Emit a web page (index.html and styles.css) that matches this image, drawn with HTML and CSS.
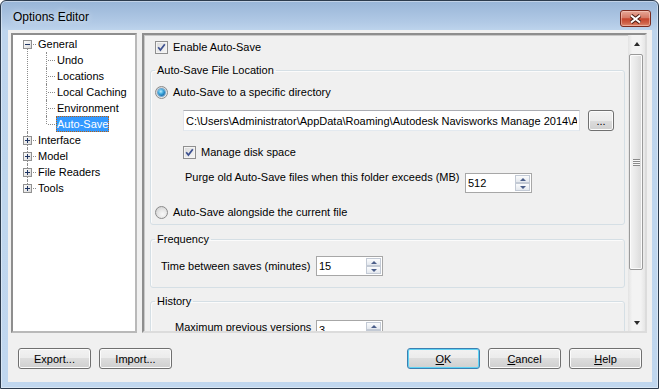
FILE: index.html
```html
<!DOCTYPE html>
<html lang="en">

<head>
  <meta charset="UTF-8" />
  <meta name="viewport" content="width=device-width, initial-scale=1.0" />
  <title>Options Editor</title>
  <link rel="stylesheet" href="styles.css">
</head>

<body>
  <div class="window">

    <div class="titlebar">
      <span class="title">Options Editor</span>
      <span class="close_btn">
        <svg width="13" height="10" viewBox="0 0 13 10">
          <path d="M2 1.5 L11 8.5 M11 1.5 L2 8.5" stroke="#4a1e16" stroke-width="4" />
          <path d="M2 1.5 L11 8.5 M11 1.5 L2 8.5" stroke="#ffffff" stroke-width="2" />
        </svg>
      </span>
    </div>

    <div class="client">
      <div class="main">

        <!-- Options tree -->
        <div class="tree">
          <ul class="tree_root">
            <li>
              <div class="node">
                <svg class="expander" width="14" height="9" viewBox="0 0 14 9">
                  <rect x="0.5" y="0.5" width="8" height="8" fill="url(#boxfill)" stroke="#919191" />
                  <path d="M2 4.5 H7" stroke="#1f3563" />
                  <rect x="10" y="4" width="1" height="1" fill="#8c8c8c" />
                  <rect x="12" y="4" width="1" height="1" fill="#8c8c8c" />
                  <defs>
                    <linearGradient id="boxfill" x1="0" y1="0" x2="1" y2="1">
                      <stop offset="0" stop-color="#ffffff" />
                      <stop offset="1" stop-color="#d8d8d8" />
                    </linearGradient>
                  </defs>
                </svg>
                <span class="label">General</span>
              </div>
              <ul class="children">
                <li><span class="label">Undo</span></li>
                <li><span class="label">Locations</span></li>
                <li><span class="label">Local Caching</span></li>
                <li><span class="label">Environment</span></li>
                <li><span class="label selected">Auto-Save</span></li>
              </ul>
            </li>
            <li>
              <div class="node">
                <svg class="expander" width="14" height="9" viewBox="0 0 14 9">
                  <rect x="0.5" y="0.5" width="8" height="8" fill="url(#boxfill)" stroke="#919191" />
                  <path d="M2 4.5 H7 M4.5 2 V7" stroke="#1f3563" />
                  <rect x="10" y="4" width="1" height="1" fill="#8c8c8c" />
                  <rect x="12" y="4" width="1" height="1" fill="#8c8c8c" />
                </svg>
                <span class="label">Interface</span>
              </div>
            </li>
            <li>
              <div class="node">
                <svg class="expander" width="14" height="9" viewBox="0 0 14 9">
                  <rect x="0.5" y="0.5" width="8" height="8" fill="url(#boxfill)" stroke="#919191" />
                  <path d="M2 4.5 H7 M4.5 2 V7" stroke="#1f3563" />
                  <rect x="10" y="4" width="1" height="1" fill="#8c8c8c" />
                  <rect x="12" y="4" width="1" height="1" fill="#8c8c8c" />
                </svg>
                <span class="label">Model</span>
              </div>
            </li>
            <li>
              <div class="node">
                <svg class="expander" width="14" height="9" viewBox="0 0 14 9">
                  <rect x="0.5" y="0.5" width="8" height="8" fill="url(#boxfill)" stroke="#919191" />
                  <path d="M2 4.5 H7 M4.5 2 V7" stroke="#1f3563" />
                  <rect x="10" y="4" width="1" height="1" fill="#8c8c8c" />
                  <rect x="12" y="4" width="1" height="1" fill="#8c8c8c" />
                </svg>
                <span class="label">File Readers</span>
              </div>
            </li>
            <li>
              <div class="node">
                <svg class="expander" width="14" height="9" viewBox="0 0 14 9">
                  <rect x="0.5" y="0.5" width="8" height="8" fill="url(#boxfill)" stroke="#919191" />
                  <path d="M2 4.5 H7 M4.5 2 V7" stroke="#1f3563" />
                  <rect x="10" y="4" width="1" height="1" fill="#8c8c8c" />
                  <rect x="12" y="4" width="1" height="1" fill="#8c8c8c" />
                </svg>
                <span class="label">Tools</span>
              </div>
            </li>
          </ul>
        </div>

        <!-- Auto-Save page -->
        <div class="pane">
          <div class="pane_content">

            <div class="check_row enable_row">
              <span class="checkbox">
                <svg width="9" height="9" viewBox="0 0 9 9"><path d="M1.2 4.2 L3.4 7 L7.8 1.2" fill="none" stroke="#3d5190" stroke-width="1.7" /></svg>
              </span>
              <span>Enable Auto-Save</span>
            </div>

            <fieldset class="group location_group">
              <legend>Auto-Save File Location</legend>

              <div class="radio_row first_radio">
                <span class="radio"><span class="radio_dot"></span></span>
                <span>Auto-Save to a specific directory</span>
              </div>

              <div class="path_row">
                <input class="path_box" type="text" readonly
                  value="C:\Users\Administrator\AppData\Roaming\Autodesk Navisworks Manage 2014\AutoSave" />
                <button class="win_btn browse_btn">...</button>
              </div>

              <div class="check_row disk_row">
                <span class="checkbox">
                  <svg width="9" height="9" viewBox="0 0 9 9"><path d="M1.2 4.2 L3.4 7 L7.8 1.2" fill="none" stroke="#3d5190" stroke-width="1.7" /></svg>
                </span>
                <span>Manage disk space</span>
              </div>

              <div class="field_row purge_row">
                <span class="field_label purge_label">Purge old Auto-Save files when this folder exceeds (MB)</span>
                <div class="spinner">
                  <span class="spin_value">512</span>
                  <span class="spin_btns">
                    <span class="spin_btn"><span class="arrow_up"></span></span>
                    <span class="spin_btn"><span class="arrow_down"></span></span>
                  </span>
                </div>
              </div>

              <div class="radio_row alongside_row">
                <span class="radio"></span>
                <span>Auto-Save alongside the current file</span>
              </div>
            </fieldset>

            <fieldset class="group frequency_group">
              <legend>Frequency</legend>
              <div class="field_row time_row">
                <span class="field_label time_label">Time between saves (minutes)</span>
                <div class="spinner">
                  <span class="spin_value">15</span>
                  <span class="spin_btns">
                    <span class="spin_btn"><span class="arrow_up"></span></span>
                    <span class="spin_btn"><span class="arrow_down"></span></span>
                  </span>
                </div>
              </div>
            </fieldset>

            <fieldset class="group history_group">
              <legend>History</legend>
              <div class="field_row versions_row">
                <span class="field_label versions_label">Maximum previous versions</span>
                <div class="spinner">
                  <span class="spin_value">3</span>
                  <span class="spin_btns">
                    <span class="spin_btn"><span class="arrow_up"></span></span>
                    <span class="spin_btn"><span class="arrow_down"></span></span>
                  </span>
                </div>
              </div>
            </fieldset>

          </div>

          <div class="scrollbar">
            <div class="scroll_arrow"><span class="arrow_up dark"></span></div>
            <div class="scroll_track">
              <div class="scroll_thumb"><span class="grip"></span></div>
            </div>
            <div class="scroll_arrow"><span class="arrow_down dark"></span></div>
          </div>
        </div>
      </div>

      <div class="footer">
        <div class="btn_grp">
          <button class="win_btn">Export...</button>
          <button class="win_btn">Import...</button>
        </div>
        <div class="btn_grp">
          <button class="win_btn default_btn"><u>O</u>K</button>
          <button class="win_btn"><u>C</u>ancel</button>
          <button class="win_btn"><u>H</u>elp</button>
        </div>
      </div>
    </div>
  </div>
</body>

</html>
```

FILE: styles.css
```css
* {
  box-sizing: border-box;
}

body {
  margin: 0;
  background: #ffffff;
  font-family: 'Liberation Sans', Arial, sans-serif;
  font-size: 11px;
  color: #000;
}

.window {
  width: 659px;
  height: 389px;
  display: flex;
  flex-direction: column;
  border: 1px solid #2c3b4d;
  border-radius: 6px 6px 0 0;
  background: linear-gradient(#98b5d7 0px, #b2cae6 22px, #bed5ed 30px, #c0d7ef 100%);
  box-shadow: inset 0 0 0 1px rgba(255, 255, 255, 0.4);
}

/* Title bar */

.titlebar {
  height: 29px;
  display: flex;
  align-items: flex-start;
  justify-content: space-between;
  padding: 8px 7px 0 12px;
}

.title {
  font-size: 12px;
  line-height: 17px;
  text-shadow: 0 0 6px rgba(255, 255, 255, 0.9);
}

.close_btn {
  width: 31px;
  height: 17px;
  margin-top: 1px;
  display: flex;
  align-items: center;
  justify-content: center;
  border: 1px solid #7b2c20;
  border-radius: 3px;
  background: linear-gradient(#e6a898 0%, #d67a66 45%, #c4442c 52%, #cf6248 80%, #de8a70 100%);
  box-shadow: inset 0 0 0 1px rgba(255, 220, 210, 0.45);
}

/* Client area */

.client {
  flex: 1;
  margin: 0 6px 6px 7px;
  padding: 3px 5px 0 3px;
  background: #f0f0f0;
  display: flex;
  flex-direction: column;
}

.main {
  display: flex;
  gap: 5px;
  height: 300px;
}

/* Tree */

.tree {
  width: 126px;
  background: #fff;
  border: 2px solid;
  border-color: #8e8e8e #b9b9b9 #b9b9b9 #8e8e8e;
  padding: 1px 0 0 10px;
}

.tree ul {
  list-style: none;
  margin: 0;
  padding: 0;
}

.tree_root > li {
  position: relative;
}

.tree_root > li::before {
  content: '';
  position: absolute;
  left: 4px;
  top: 0;
  bottom: 0;
  border-left: 1px dotted #8c8c8c;
}

.tree_root > li:first-child::before {
  top: 8px;
}

.tree_root > li:last-child::before {
  bottom: 8px;
}

.node {
  height: 16px;
  display: flex;
  align-items: center;
}

.expander {
  position: relative;
  z-index: 1;
}

.label {
  padding: 0 1px;
  line-height: 16px;
  white-space: nowrap;
}

.label.selected {
  padding: 0;
  height: 16px;
  line-height: 14px;
  background: #3399ff;
  color: #fff;
  border: 1px dotted #b86010;
}

.children li {
  position: relative;
  height: 16px;
  display: flex;
  align-items: center;
  padding-left: 33px;
}

.children li::before {
  content: '';
  position: absolute;
  left: 23px;
  top: 0;
  bottom: 0;
  border-left: 1px dotted #8c8c8c;
}

.children li:last-child::before {
  bottom: 8px;
}

.children li::after {
  content: '';
  position: absolute;
  left: 25px;
  top: 8px;
  width: 7px;
  border-top: 1px dotted #8c8c8c;
}

/* Right pane */

.pane {
  width: 505px;
  display: flex;
  border: 2px solid;
  border-color: #8e8e8e #dcdcdc #dcdcdc #8e8e8e;
  box-shadow: inset 1px 1px 0 #c8c8c8;
}

.pane_content {
  flex: 1;
  overflow: hidden;
  padding: 0 3px 0 6px;
}

.check_row,
.radio_row {
  display: flex;
  align-items: center;
  gap: 5px;
  height: 13px;
  line-height: 13px;
  white-space: nowrap;
}

.enable_row {
  margin: 6px 0 0 5px;
}

.checkbox {
  width: 13px;
  height: 13px;
  flex: none;
  display: flex;
  align-items: center;
  justify-content: center;
  border: 1px solid #8f8f8f;
  background: linear-gradient(135deg, #dadada, #f7f7f7);
  box-shadow: inset 0 0 0 1px #f4f4f4;
}

.radio {
  width: 13px;
  height: 13px;
  flex: none;
  display: flex;
  align-items: center;
  justify-content: center;
  border: 1px solid #8b8b8b;
  border-radius: 50%;
  background: radial-gradient(circle at 60% 65%, #f8f8f8 0, #e6e6e6 45%, #c9c9c9 100%);
}

.radio_dot {
  width: 7px;
  height: 7px;
  border-radius: 50%;
  background: radial-gradient(circle at 40% 35%, #b9edff 0, #3ea9de 40%, #0d5898 85%);
  box-shadow: 0 0 0 1px #6fa6cf;
}

/* Group boxes */

.group {
  margin: 0;
  padding: 0 4px;
  border: 1px solid #d5dfe5;
  border-radius: 3px;
  box-shadow: inset 1px 1px 0 #fbfbfb;
}

.group legend {
  padding: 0 2px;
  line-height: 13px;
}

.location_group {
  margin-top: 10px;
  padding-bottom: 5px;
}

.frequency_group {
  margin-top: 8px;
  padding-bottom: 11px;
}

.history_group {
  margin-top: 7px;
  padding-bottom: 11px;
}

.first_radio {
  margin-top: 9px;
}

.path_row {
  display: flex;
  gap: 8px;
  margin: 11px 0 0 28px;
}

.path_box {
  width: 397px;
  height: 21px;
  padding: 0 2px;
  border: 1px solid;
  border-color: #abadb3 #dbdfe6 #e3e9ef #e2e3ea;
  font-family: inherit;
  font-size: 11px;
  color: #000;
  background: #fff;
  outline: 0;
}

.disk_row {
  margin: 15px 0 0 28px;
}

.field_row {
  display: flex;
  align-items: center;
}

.field_label {
  flex: none;
  white-space: nowrap;
}

.purge_row {
  align-items: flex-start;
  margin: 14px 0 0 30px;
}

.purge_label {
  width: 280px;
  margin-top: -2px;
}

.alongside_row {
  margin-top: 13px;
}

.time_row {
  margin: 10px 0 0 6px;
}

.time_label {
  width: 155px;
}

.versions_row {
  margin: 12px 0 0 20px;
  align-items: flex-start;
}

.versions_label {
  width: 141px;
  margin-top: 1px;
}

/* Spinners */

.spinner {
  width: 67px;
  height: 20px;
  display: flex;
  padding: 1px;
  border: 1px solid #a7a7a7;
  background: #fff;
}

.spin_value {
  flex: 1;
  padding-left: 1px;
  line-height: 16px;
}

.spin_btns {
  width: 15px;
  display: flex;
  flex-direction: column;
}

.spin_btn {
  flex: 1;
  display: flex;
  align-items: center;
  justify-content: center;
  border: 1px solid #c3cad5;
  background: linear-gradient(#fbfcfd, #e4e8ee);
}

.arrow_up,
.arrow_down {
  width: 0;
  height: 0;
  border-left: 3px solid transparent;
  border-right: 3px solid transparent;
}

.arrow_up {
  border-bottom: 3px solid #4b5e89;
}

.arrow_down {
  border-top: 3px solid #4b5e89;
}

.arrow_up.dark {
  border-bottom-color: #2a2a2a;
  border-left-width: 3.5px;
  border-right-width: 3.5px;
  border-bottom-width: 4px;
}

.arrow_down.dark {
  border-top-color: #2a2a2a;
  border-left-width: 3.5px;
  border-right-width: 3.5px;
  border-top-width: 4px;
}

/* Scrollbar */

.scrollbar {
  width: 17px;
  display: flex;
  flex-direction: column;
  background: linear-gradient(to right, #e3e3e3, #f3f3f3 25%, #f3f3f3 75%, #e6e6e6);
}

.scroll_arrow {
  height: 17px;
  display: flex;
  align-items: center;
  justify-content: center;
}

.scroll_track {
  flex: 1;
  padding: 2px 2px 0 1px;
}

.scroll_thumb {
  height: 216px;
  display: flex;
  align-items: center;
  justify-content: center;
  border: 1px solid #9a9a9a;
  border-radius: 2px;
  background: linear-gradient(to right, #f4f4f4, #e8e8e8 50%, #d9d9d9);
  box-shadow: inset 0 0 0 1px #fbfbfb;
}

.grip {
  width: 7px;
  height: 7px;
  background: repeating-linear-gradient(#8a8a8a 0, #8a8a8a 1px, #f8f8f8 1px, #f8f8f8 2px);
}

/* Buttons */

.footer {
  display: flex;
  justify-content: space-between;
  margin-top: 15px;
  padding: 0 5px 0 7px;
}

.btn_grp {
  display: flex;
  gap: 8px;
}

.win_btn {
  width: 73px;
  height: 21px;
  padding: 0;
  font-family: inherit;
  font-size: 11px;
  color: #000;
  border: 1px solid #707070;
  border-radius: 3px;
  background: linear-gradient(#f2f2f2 0%, #ebebeb 50%, #dddddd 50%, #cfcfcf 100%);
  box-shadow: inset 0 0 0 1px #fcfcfc;
}

.default_btn {
  border-color: #3c7fb1;
  box-shadow: inset 0 0 0 1px #5fd3f4;
}

.browse_btn {
  width: 26px;
}
```
